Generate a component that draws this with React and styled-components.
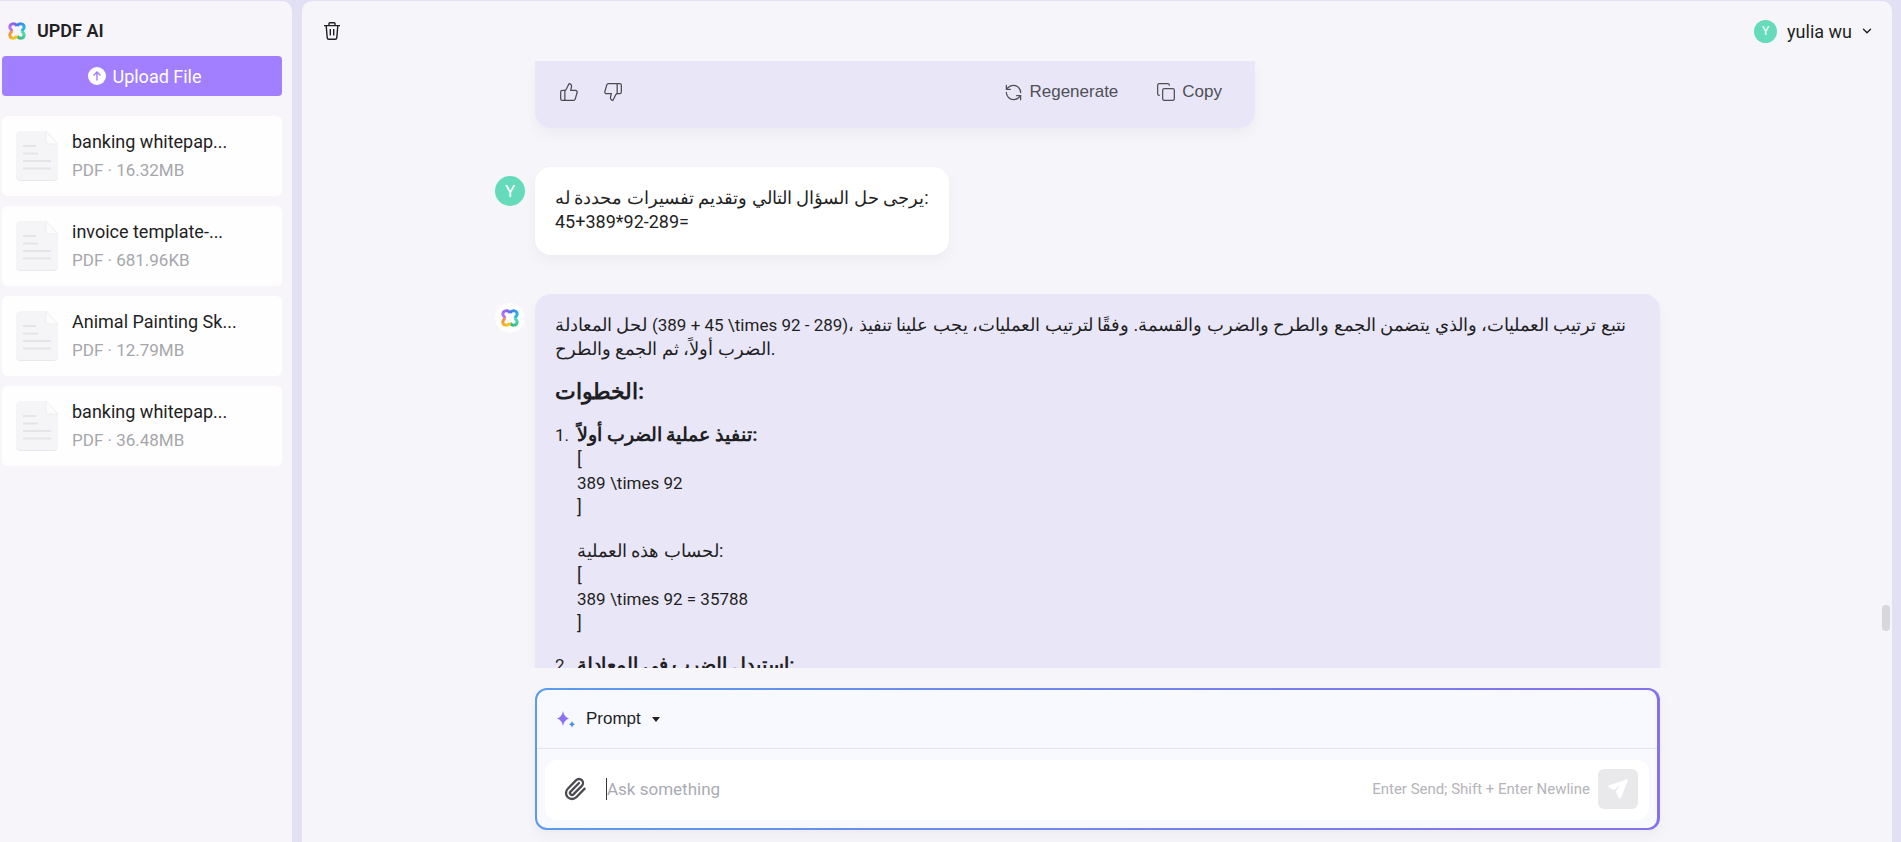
import React from 'react';
import styled, { createGlobalStyle } from 'styled-components';
import {
  ChevronDown,
  Copy,
  Paperclip,
  RefreshCcw,
  ThumbsDown,
  ThumbsUp,
} from 'lucide-react';

const files = [
  { id: 1, name: 'banking whitepap...', size: '16.32MB' },
  { id: 2, name: 'invoice template-...', size: '681.96KB' },
  { id: 3, name: 'Animal Painting Sk...', size: '12.79MB' },
  { id: 4, name: 'banking whitepap...', size: '36.48MB' },
];

const Logo = () => (
  <svg width='18' height='18' viewBox='0 0 24 24' fill='none' strokeWidth='4'>
    <defs>
      <linearGradient id='violet' x1='0' y1='1' x2='1' y2='0'>
        <stop offset='0' stopColor='#c07af0' />
        <stop offset='1' stopColor='#7a5cf0' />
      </linearGradient>
      <linearGradient id='blue' x1='0' y1='0' x2='1' y2='1'>
        <stop offset='0' stopColor='#3d7bf0' />
        <stop offset='1' stopColor='#22c3ea' />
      </linearGradient>
      <linearGradient id='green' x1='1' y1='0' x2='0' y2='1'>
        <stop offset='0' stopColor='#58dcc0' />
        <stop offset='1' stopColor='#2fb573' />
      </linearGradient>
      <linearGradient id='yellow' x1='0' y1='0' x2='1' y2='1'>
        <stop offset='0' stopColor='#ef8a4a' />
        <stop offset='1' stopColor='#f6cf10' />
      </linearGradient>
    </defs>
    <path stroke='url(#violet)' d='M12 5.4C9.4 1 2.6 1.6 2.4 6.8C2.4 9.4 4.6 10 5.2 12' />
    <path stroke='url(#blue)' d='M12 5.4C14.6 1 21.4 1.6 21.6 6.8C21.6 9.4 19.4 10 18.8 12' />
    <path stroke='url(#green)' d='M12 18.6C14.6 23 21.4 22.4 21.6 17.2C21.6 14.6 19.4 14 18.8 12' />
    <path stroke='url(#yellow)' d='M12 18.6C9.4 23 2.6 22.4 2.4 17.2C2.4 14.6 4.6 14 5.2 12' />
  </svg>
);

const UploadIcon = () => (
  <svg width='18' height='18' viewBox='0 0 18 18' fill='none'>
    <circle cx='9' cy='9' r='9' fill='#ffffff' />
    <path d='M9 13.5V5.5M5.5 8.5L9 5L12.5 8.5' stroke='#a17fff' strokeWidth='1.4' />
  </svg>
);

const FileIcon = () => (
  <svg width='42' height='50' viewBox='0 0 42 50' fill='none'>
    <path d='M5 1H30L42 14V45Q42 50 37 50H5Q0 50 0 45V6Q0 1 5 1Z' fill='#e9e8ec' />
    <path d='M5 0H30L42 13V44Q42 49 37 49H5Q0 49 0 44V5Q0 0 5 0Z' fill='#f5f4f7' />
    <path d='M30 0V10Q30 13 33 13H42Z' fill='#fcfcfd' stroke='#eeedf1' />
    <path d='M7 15H20M7 22.5H22M7 30H35M7 37.5H35' stroke='#e5e4e8' strokeWidth='2' />
  </svg>
);

const TrashIcon = () => (
  <svg width='16' height='18' viewBox='0 0 16 18' fill='none' stroke='#222226' strokeWidth='1.4'>
    <path d='M0 3.6H16M5 3.4V1.6Q5 0.8 5.8 0.8H10.2Q11 0.8 11 1.6V3.4' />
    <path d='M2.2 3.8L3.2 15.6Q3.3 17.2 4.8 17.2H11.2Q12.7 17.2 12.8 15.6L13.8 3.8' />
    <path d='M6.3 7V13.4M9.7 7V13.4' />
  </svg>
);

const SparkIcon = () => (
  <svg width='18' height='18' viewBox='0 0 18 18'>
    <path d='M6 1Q7 7 12 8.500Q7 10 6 16Q5 10 0 8.500Q5 7 6 1Z' fill='#8d70f4' />
    <path d='M15 11Q15.500 13.500 18 14.200Q15.500 15 15 17.500Q14.500 15 12 14.200Q14.500 13.500 15 11Z' fill='#4a90ee' />
  </svg>
);

const SendIcon = () => (
  <svg width='22' height='22' viewBox='0 0 22 22'>
    <path
      d='M20.200 1.300L1.600 7.600Q0.600 8.200 1.500 9L6.800 12L13 7.500L8.800 13.600L11.600 19.800Q12.600 21 14 19.600L21 2.300Q21.300 1.200 20.200 1.300Z'
      fill='#ffffff'
    />
  </svg>
);

const App = () => {
  return (
    <>
      <GlobalStyle />
      <Page>
        <Sidebar>
          <Brand>
            <Logo />
            <BrandName>UPDF AI</BrandName>
          </Brand>
          <UploadButton type='button'>
            <UploadIcon />
            Upload File
          </UploadButton>
          <FileList>
            {files.map((file) => (
              <FileCard key={file.id}>
                <FileIcon />
                <div>
                  <FileName>{file.name}</FileName>
                  <FileMeta>PDF · {file.size}</FileMeta>
                </div>
              </FileCard>
            ))}
          </FileList>
        </Sidebar>

        <Main>
          <TopBar>
            <IconButton type='button' aria-label='Clear chat'>
              <TrashIcon />
            </IconButton>
            <AccountButton type='button'>
              <Avatar $size={23} $font={12}>Y</Avatar>
              yulia wu
              <ChevronDown size={14} strokeWidth={2.4} />
            </AccountButton>
          </TopBar>

          <Chat>
            <Message $indent>
              <ActionBubble>
                <ActionGroup $gap={24}>
                  <IconButton type='button' aria-label='Like'>
                    <ThumbsUp size={20} strokeWidth={1.5} />
                  </IconButton>
                  <IconButton type='button' aria-label='Dislike'>
                    <ThumbsDown size={20} strokeWidth={1.5} />
                  </IconButton>
                </ActionGroup>
                <ActionGroup $gap={38}>
                  <ActionButton type='button'>
                    <RefreshCcw size={19} strokeWidth={1.6} />
                    Regenerate
                  </ActionButton>
                  <ActionButton type='button'>
                    <Copy size={20} strokeWidth={1.5} />
                    Copy
                  </ActionButton>
                </ActionGroup>
              </ActionBubble>
            </Message>

            <Message>
              <Avatar $size={30} $font={17}>Y</Avatar>
              <UserBubble>
                يرجى حل السؤال التالي وتقديم تفسيرات محددة له:
                <br />
                45+389*92-289=
              </UserBubble>
            </Message>

            <Message>
              <BotAvatar>
                <Logo />
              </BotAvatar>
              <BotBubble>
                <Paragraph>
                  لحل المعادلة{' \u200E'}
                  <Formula>(389 + 45 \times 92 - 289)</Formula>
                  {'،\u200E '}
                  نتبع ترتيب العمليات، والذي يتضمن الجمع والطرح والضرب والقسمة. وفقًا
                  لترتيب العمليات، يجب علينا تنفيذ الضرب أولاً، ثم الجمع والطرح.
                </Paragraph>
                <StepsTitle>الخطوات:</StepsTitle>
                <Steps>
                  <Step>
                    <Paragraph>
                      <StepName>تنفيذ عملية الضرب أولاً:</StepName>
                      <br />[<br />
                      <Formula>389 \times 92</Formula>
                      <br />]
                    </Paragraph>
                    <Paragraph>
                      لحساب هذه العملية:
                      <br />[<br />
                      <Formula>389 \times 92 = 35788</Formula>
                      <br />]
                    </Paragraph>
                  </Step>
                  <Step>
                    <Paragraph>
                      <StepName>استبدل الضرب في المعادلة:</StepName>
                    </Paragraph>
                  </Step>
                </Steps>
              </BotBubble>
            </Message>
            <ScrollThumb />
          </Chat>

          <Composer>
            <PromptBar>
              <PromptButton type='button'>
                <SparkIcon />
                Prompt
                <Caret />
              </PromptButton>
            </PromptBar>
            <InputArea>
              <InputRow>
                <IconButton type='button' aria-label='Attach file'>
                  <Paperclip size={24} strokeWidth={2.3} />
                </IconButton>
                <AskInput type='text' placeholder='Ask something' aria-label='Ask something' />
                <Hint>Enter Send; Shift + Enter Newline</Hint>
                <SendButton type='button' aria-label='Send'>
                  <SendIcon />
                </SendButton>
              </InputRow>
            </InputArea>
          </Composer>
        </Main>
      </Page>
    </>
  );
};

export default App;

const GlobalStyle = createGlobalStyle`
  * {
    box-sizing: border-box;
    margin: 0;
    padding: 0;
  }
  body {
    font-family: Roboto, 'Noto Sans', sans-serif;
    font-size: 18px;
    color: #1f1f24;
    background: #e2e0f3;
  }
  button {
    border: none;
    background: none;
    font: inherit;
    color: inherit;
    cursor: pointer;
  }
`;

const Page = styled.div`
  display: flex;
  gap: 10px;
  height: 100vh;
  padding: 1px 9px 0 0;
  overflow: hidden;
`;

const Sidebar = styled.aside`
  flex: 0 0 292px;
  padding: 0 10px 0 2px;
  border-top-right-radius: 10px;
  background: #f7f5fa;
`;

const Brand = styled.div`
  display: flex;
  align-items: center;
  gap: 11px;
  height: 55px;
  padding: 4px 0 0 6px;
`;

const BrandName = styled.h1`
  font-size: 18px;
  font-weight: 600;
  line-height: 24px;
`;

const UploadButton = styled.button`
  display: flex;
  align-items: center;
  justify-content: center;
  gap: 6px;
  width: 100%;
  height: 40px;
  padding-left: 6px;
  border-radius: 4px;
  background: #a17fff;
  color: #ffffff;
`;

const FileList = styled.ul`
  display: flex;
  flex-direction: column;
  gap: 10px;
  margin-top: 20px;
  list-style: none;
`;

const FileCard = styled.li`
  display: flex;
  align-items: center;
  gap: 14px;
  height: 80px;
  padding: 0 14px;
  border-radius: 6px;
  background: #fefefe;
`;

const FileName = styled.p`
  line-height: 28px;
`;

const FileMeta = styled.p`
  font-size: 17px;
  line-height: 28px;
  color: #a6a6ab;
`;

const Main = styled.main`
  display: flex;
  flex: 1;
  flex-direction: column;
  min-width: 0;
  border-radius: 10px 10px 0 0;
  background: #f6f6fa;
`;

const TopBar = styled.header`
  display: flex;
  flex: 0 0 60px;
  align-items: center;
  justify-content: space-between;
  padding: 0 18px 0 22px;
`;

const IconButton = styled.button`
  display: flex;
  color: #4b4b52;
`;

const AccountButton = styled.button`
  display: flex;
  align-items: center;
  gap: 8px;
`;

const Avatar = styled.span`
  display: flex;
  flex: none;
  align-items: center;
  justify-content: center;
  width: ${({ $size }) => $size}px;
  height: ${({ $size }) => $size}px;
  margin-right: 2px;
  border-radius: 50%;
  background: #65dbbb;
  color: #ffffff;
  font-size: ${({ $font }) => $font}px;
`;

const BotAvatar = styled.span`
  display: flex;
  flex: none;
  align-items: center;
  justify-content: center;
  width: 30px;
  height: 30px;
  margin-right: 2px;
  border-radius: 50%;
  background: #fdfdfe;
`;

const Chat = styled.section`
  position: relative;
  display: flex;
  flex: 1;
  flex-direction: column;
  gap: 39px;
  min-height: 0;
  padding: 0 232px 0 193px;
  overflow: hidden;
`;

const Message = styled.div`
  display: flex;
  flex: none;
  gap: 8px;
  padding-left: ${({ $indent }) => ($indent ? '40px' : '0')};
  > span {
    margin-top: 9px;
  }
`;

const Bubble = styled.div`
  padding: 19px 20px 21px;
  border-radius: 16px;
  line-height: 24px;
  box-shadow: 0 6px 12px rgba(40, 30, 80, 0.05);
`;

const ActionBubble = styled(Bubble)`
  display: flex;
  align-items: center;
  justify-content: space-between;
  width: 64%;
  padding: 19px 33px 24px 24px;
  border-radius: 0 0 16px 16px;
  background: #e9e7f7;
`;

const UserBubble = styled(Bubble)`
  background: #ffffff;
`;

const BotBubble = styled(Bubble)`
  flex: 1;
  background: #e9e7f7;
`;

const ActionGroup = styled.div`
  display: flex;
  align-items: center;
  gap: ${({ $gap }) => $gap}px;
`;

const ActionButton = styled.button`
  display: flex;
  align-items: center;
  gap: 6px;
  font-family: 'Liberation Sans', Arial, sans-serif;
  font-size: 17px;
  line-height: 24px;
  color: #4f4f56;
`;

const Paragraph = styled.p`
  & + & {
    margin-top: 20px;
  }
`;

const Formula = styled.span`
  font-size: 17px;
`;

const StepsTitle = styled.h3`
  margin: 16px 0;
  font-size: 22px;
  line-height: 30px;
`;

const Steps = styled.ol`
  counter-reset: step;
  list-style: none;
`;

const Step = styled.li`
  display: grid;
  grid-template-columns: 22px 1fr;
  margin-bottom: 18px;
  counter-increment: step;
  &::before {
    content: counter(step) '.';
    grid-row: 1 / span 2;
    font-size: 17px;
  }
  > p {
    grid-column: 2;
  }
`;

const StepName = styled.strong`
  font-size: 19px;
`;

const ScrollThumb = styled.span`
  position: absolute;
  right: 2px;
  bottom: 37px;
  width: 8px;
  height: 26px;
  border-radius: 4px;
  background: #d8d8dc;
`;

const Composer = styled.form`
  margin: 20px 232px 12px 233px;
  border: 2px solid transparent;
  border-right-width: 3px;
  border-radius: 12px;
  background:
    linear-gradient(#f7f9ff, #f7f9ff) padding-box,
    linear-gradient(90deg, #5b9bec, #8670ec) border-box;
  box-shadow: 0 6px 12px rgba(40, 30, 80, 0.05);
`;

const PromptBar = styled.div`
  display: flex;
  align-items: center;
  height: 59px;
  padding: 0 20px;
  border-bottom: 1px solid #e3e4ee;
`;

const PromptButton = styled.button`
  display: flex;
  align-items: center;
  gap: 11px;
  font-family: 'Liberation Sans', Arial, sans-serif;
  font-size: 17px;
`;

const Caret = styled.span`
  border: 4px solid transparent;
  border-top: 5px solid #1f1f24;
  border-bottom: none;
`;

const InputArea = styled.div`
  padding: 11px 8px 8px;
`;

const InputRow = styled.div`
  display: flex;
  align-items: center;
  height: 60px;
  padding: 0 11px 3px 18px;
  border-radius: 12px;
  background: #ffffff;
`;

const AskInput = styled.input`
  flex: 1;
  min-width: 0;
  height: 22px;
  margin-left: 19px;
  border: none;
  border-left: 1px solid #33333a;
  outline: none;
  background: none;
  font: inherit;
  font-size: 17px;
  &::placeholder {
    color: #a9abb3;
  }
`;

const Hint = styled.span`
  font-size: 15px;
  color: #b4b4b9;
`;

const SendButton = styled.button`
  display: flex;
  align-items: center;
  justify-content: center;
  width: 40px;
  height: 40px;
  margin-left: 8px;
  border-radius: 6px;
  background: #e9e9eb;
`;
